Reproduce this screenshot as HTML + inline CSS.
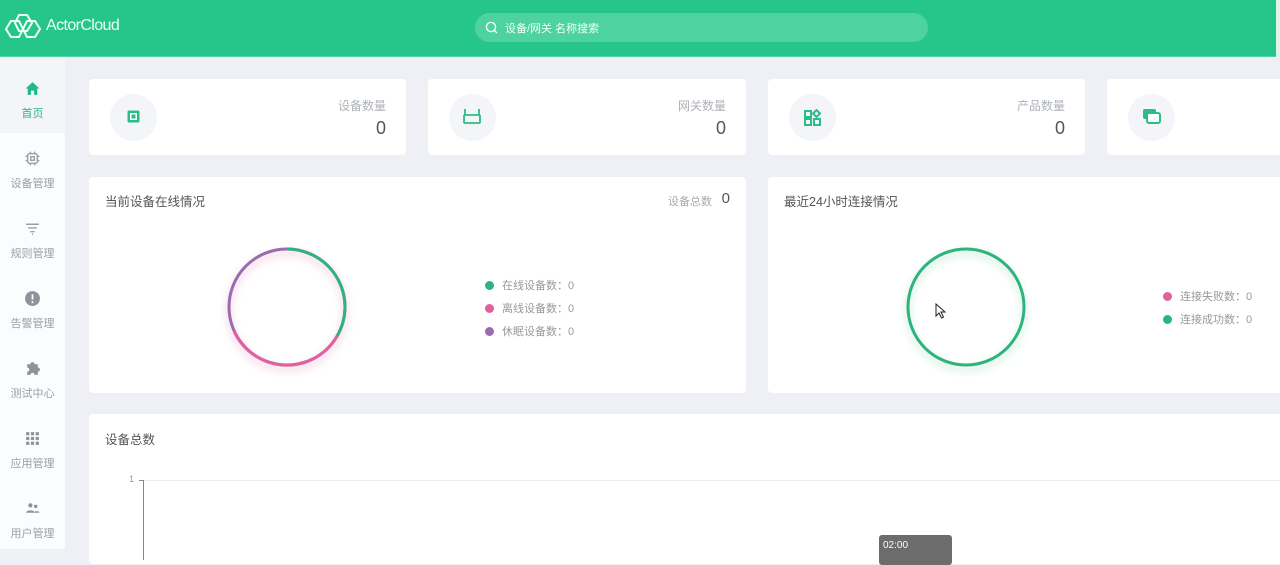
<!DOCTYPE html>
<html><head><meta charset="utf-8"><style>
*{margin:0;padding:0;box-sizing:border-box}
body{width:1280px;height:549px;overflow:hidden;background:#eef0f5;font-family:"Liberation Sans","Noto Sans CJK SC",sans-serif;position:relative}
.a{position:absolute}
.hdr{left:0;top:0;width:1280px;height:57px;background:#26c68a;border-bottom:1px solid #4fd6a3}
.side{left:0;top:57px;width:65px;height:492px;background:#fbfcfd}
.item{position:absolute;left:0;width:65px;height:70px;text-align:center;font-size:11px;color:#9a9ea6}
.item svg{position:absolute;left:24px;top:23px}
.item span{position:absolute;left:0;right:0;top:48px}
.card{position:absolute;background:#fff;border-radius:4px}
.circ{position:absolute;left:21px;top:15px;width:47px;height:47px;border-radius:50%;background:#f3f5f8}
.lbl{position:absolute;right:20px;top:18px;font-size:12px;color:#aeb2b8}
.num{position:absolute;right:20px;top:39px;font-size:18px;color:#555}
.title{position:absolute;left:16px;top:14px;font-size:12.5px;color:#555}
.leg{position:absolute;font-size:11px;color:#999}
.leg i{display:inline-block;width:9px;height:9px;border-radius:50%;margin-right:8px;vertical-align:-1px}
</style></head><body>
<div class="a hdr"></div>
<svg class="a" style="left:4px;top:12px" width="40" height="30" viewBox="0 0 40 30" fill="none" stroke="#e8fff5" stroke-width="2">
<path d="M2 17 L7 9 L15 9 L19 17 L15 25 L7 25 Z"/>
<path d="M19 17 L23 9 L31 9 L36 17 L31 25 L23 25 Z"/>
<path d="M11 11 L15 3 L23 3 L28 11 L23 19 L15 19 Z"/>
</svg>
<div class="a" style="left:46px;top:17px;font-size:16px;color:#e8fff5;letter-spacing:-0.6px">ActorCloud</div>
<div class="a" style="left:475px;top:13px;width:453px;height:29px;border-radius:15px;background:#4fd39e"></div>
<svg class="a" style="left:485px;top:21px" width="13" height="13" viewBox="0 0 13 13" fill="none" stroke="#fff" stroke-width="1.3"><circle cx="6" cy="6" r="4.6"/><path d="M9.4 9.4L12 12"/></svg>
<div class="a" style="left:505px;top:20px;font-size:11px;color:#f0fff8">设备/网关 名称搜索</div>
<div class="a" style="left:1276px;top:0;width:4px;height:57px;background:#dff5ec"></div>

<div class="a side"></div>
<div class="item" style="top:57px;background:#f3f5f8;height:76px;color:#26b884">
<svg width="17" height="17" viewBox="0 0 16 16" style="top:23px"><path d="M8 2L1.5 8H3.5V14H6.5V10H9.5V14H12.5V8H14.5Z" fill="#26b884"/></svg><span style="top:48px">首页</span></div>
<div class="item" style="top:127px"><svg width="17" height="17" viewBox="0 0 16 16" fill="none" stroke="#9a9ea6" stroke-width="1.3"><rect x="3.5" y="3.5" width="9" height="9" rx="1.5"/><rect x="6.3" y="6.3" width="3.4" height="3.4"/><path d="M6 1.5v2M10 1.5v2M6 12.5v2M10 12.5v2M1.5 6h2M1.5 10h2M12.5 6h2M12.5 10h2"/></svg><span>设备管理</span></div>
<div class="item" style="top:197px"><svg width="17" height="17" viewBox="0 0 16 16" stroke="#9a9ea6" stroke-width="1.3"><path d="M2 4h12M4 7.5h8M6 11h4M7.5 13.5h1"/></svg><span>规则管理</span></div>
<div class="item" style="top:267px"><svg width="17" height="17" viewBox="0 0 16 16"><circle cx="8" cy="8" r="7" fill="#8e929a"/><path d="M8 4v5" stroke="#fff" stroke-width="1.6"/><circle cx="8" cy="11.5" r="1" fill="#fff"/></svg><span>告警管理</span></div>
<div class="item" style="top:337px"><svg width="17" height="17" viewBox="0 0 16 16"><path d="M3 4h3a2 2 0 1 1 4 0h3v3a2 2 0 1 1 0 4v3h-3a2 2 0 1 0-4 0H3v-3a2 2 0 1 0 0-4z" fill="#8e929a"/></svg><span>测试中心</span></div>
<div class="item" style="top:407px"><svg width="17" height="17" viewBox="0 0 16 16" fill="#8e929a"><rect x="2" y="2" width="3" height="3"/><rect x="6.5" y="2" width="3" height="3"/><rect x="11" y="2" width="3" height="3"/><rect x="2" y="6.5" width="3" height="3"/><rect x="6.5" y="6.5" width="3" height="3"/><rect x="11" y="6.5" width="3" height="3"/><rect x="2" y="11" width="3" height="3"/><rect x="6.5" y="11" width="3" height="3"/><rect x="11" y="11" width="3" height="3"/></svg><span>应用管理</span></div>
<div class="item" style="top:477px"><svg width="17" height="17" viewBox="0 0 16 16" fill="#8e929a"><circle cx="6" cy="5" r="2"/><circle cx="11" cy="6" r="1.6"/><path d="M2 12c0-3 8-3 8 0zM9.5 12c0-2 5-2 5 0z"/></svg><span>用户管理</span></div>

<div class="card" style="left:89px;top:79px;width:317px;height:76px"><div class="circ"></div>
<svg class="a" style="left:38px;top:31px" width="13" height="13" viewBox="0 0 13 13"><rect x="0.5" y="0.5" width="12" height="12" rx="1.5" fill="#2bbd87"/><rect x="3" y="3" width="7" height="7" fill="#fff"/><rect x="4.5" y="4.5" width="4" height="4" fill="#2bbd87"/></svg>
<div class="lbl">设备数量</div><div class="num">0</div></div>
<div class="card" style="left:428px;top:79px;width:318px;height:76px"><div class="circ"></div>
<svg class="a" style="left:34px;top:29px" width="20" height="17" viewBox="0 0 20 17" fill="none" stroke="#2bbd87" stroke-width="1.8"><path d="M3 1v6M17 1v6"/><rect x="2" y="7" width="16" height="8" rx="1"/></svg>
<div class="lbl">网关数量</div><div class="num">0</div></div>
<div class="card" style="left:768px;top:79px;width:317px;height:76px"><div class="circ"></div>
<svg class="a" style="left:36px;top:30px" width="17" height="17" viewBox="0 0 17 17" fill="none" stroke="#2bbd87" stroke-width="2"><rect x="1" y="2" width="6" height="6"/><rect x="1" y="10" width="6" height="6"/><rect x="10" y="10" width="6" height="6"/><path d="M12.5 1L16 4.5 12.5 8 9 4.5Z"/></svg>
<div class="lbl">产品数量</div><div class="num">0</div></div>
<div class="card" style="left:1107px;top:79px;width:200px;height:76px"><div class="circ"></div>
<svg class="a" style="left:36px;top:30px" width="18" height="16" viewBox="0 0 18 16"><rect x="0" y="0" width="13" height="10" rx="2" fill="#2bbd87"/><rect x="4" y="4" width="13" height="10" rx="2" fill="#fff" stroke="#2bbd87" stroke-width="2"/></svg></div>

<div class="card" style="left:89px;top:177px;width:657px;height:216px">
<div class="title">当前设备在线情况</div>
<div class="a" style="right:34px;top:16px;font-size:11px;color:#aaa">设备总数</div>
<div class="a" style="right:16px;top:13px;font-size:15px;color:#555">0</div>
<svg class="a" style="left:128px;top:60px" width="140" height="140" viewBox="0 0 140 140">
<defs><filter id="f" x="-30%" y="-30%" width="160%" height="160%"><feGaussianBlur stdDeviation="4"/></filter></defs>
<circle cx="70" cy="74" r="58" fill="none" stroke="#f5dde8" stroke-width="6" filter="url(#f)"/>
<circle cx="70" cy="70" r="58" fill="none" stroke="#9b6bb0" stroke-width="3"/>
<path d="M70 12 A58 58 0 0 1 120.2 99" fill="none" stroke="#2fb37e" stroke-width="3"/>
<path d="M120.2 99 A58 58 0 0 1 17 94" fill="none" stroke="#e0619c" stroke-width="3"/>
</svg>
<div class="leg" style="left:396px;top:100px"><i style="background:#2fb37e"></i>在线设备数：0</div>
<div class="leg" style="left:396px;top:123px"><i style="background:#e0619c"></i>离线设备数：0</div>
<div class="leg" style="left:396px;top:146px"><i style="background:#9b6bb0"></i>休眠设备数：0</div>
</div>

<div class="card" style="left:768px;top:177px;width:540px;height:216px">
<div class="title">最近24小时连接情况</div>
<svg class="a" style="left:128px;top:60px" width="140" height="140" viewBox="0 0 140 140">
<circle cx="70" cy="74" r="58" fill="none" stroke="#dcf3e6" stroke-width="6" filter="url(#f)"/>
<circle cx="70" cy="70" r="58" fill="none" stroke="#2fb37e" stroke-width="3"/></svg>
<div class="leg" style="left:395px;top:111px"><i style="background:#e0619c"></i>连接失败数：0</div>
<div class="leg" style="left:395px;top:134px"><i style="background:#2fb37e"></i>连接成功数：0</div>
</div>
<svg class="a" style="left:935px;top:303px" width="12" height="16" viewBox="0 0 12 16"><path d="M1 1V13L4 10L6.5 15L8.5 14L6 9H10Z" fill="#fff" stroke="#222" stroke-width="1"/></svg>

<div class="card" style="left:89px;top:414px;width:1220px;height:150px">
<div class="title" style="top:15px">设备总数</div>
<div class="a" style="left:40px;top:60px;font-size:9px;color:#999">1</div>
<div class="a" style="left:54px;top:66px;width:1170px;height:1px;background:#eee"></div>
<div class="a" style="left:50px;top:66px;width:4px;height:1px;background:#888"></div>
<div class="a" style="left:54px;top:66px;width:1px;height:80px;background:#888"></div>
<div class="a" style="left:790px;top:121px;width:73px;height:30px;border-radius:3px;background:#6c6c6c;color:#fff;font-size:10px;padding:5px 4px">02:00</div>
</div>
</body></html>
